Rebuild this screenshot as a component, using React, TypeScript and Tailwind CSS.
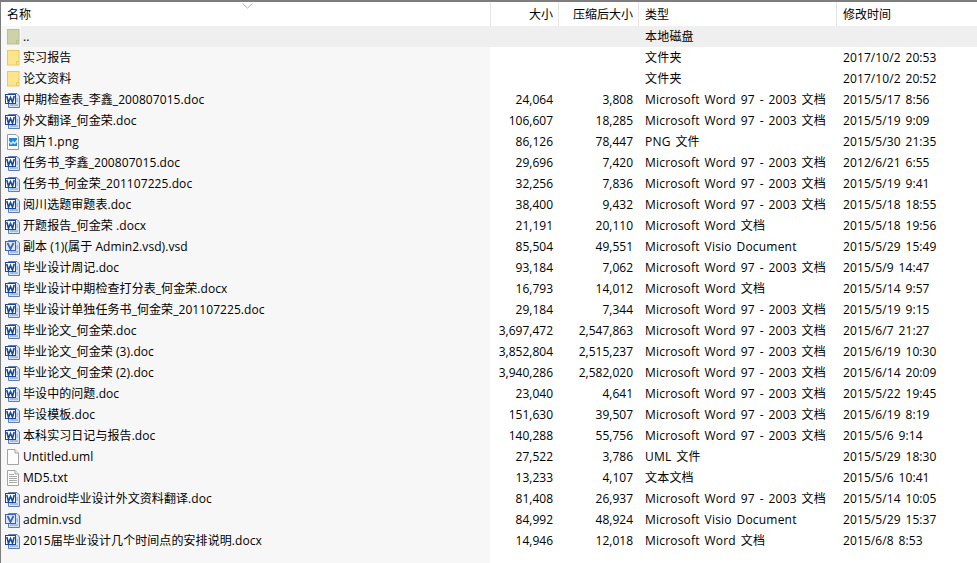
import React from "react";

type Kind = "up" | "folder" | "word" | "png" | "visio" | "blank" | "txt";
type Row = [Kind, string, string, string, string, string];

const WORD = "Microsoft Word 97 - 2003 文档";
const DOCX = "Microsoft Word 文档";
const VISIO = "Microsoft Visio Document";

const rows: Row[] = [
  ["up", "..", "", "", "本地磁盘", ""],
  ["folder", "实习报告", "", "", "文件夹", "2017/10/2 20:53"],
  ["folder", "论文资料", "", "", "文件夹", "2017/10/2 20:52"],
  ["word", "中期检查表_李鑫_200807015.doc", "24,064", "3,808", WORD, "2015/5/17 8:56"],
  ["word", "外文翻译_何金荣.doc", "106,607", "18,285", WORD, "2015/5/19 9:09"],
  ["png", "图片1.png", "86,126", "78,447", "PNG 文件", "2015/5/30 21:35"],
  ["word", "任务书_李鑫_200807015.doc", "29,696", "7,420", WORD, "2012/6/21 6:55"],
  ["word", "任务书_何金荣_201107225.doc", "32,256", "7,836", WORD, "2015/5/19 9:41"],
  ["word", "阅川选题审题表.doc", "38,400", "9,432", WORD, "2015/5/18 18:55"],
  ["word", "开题报告_何金荣 .docx", "21,191", "20,110", DOCX, "2015/5/18 19:56"],
  ["visio", "副本 (1)(属于 Admin2.vsd).vsd", "85,504", "49,551", VISIO, "2015/5/29 15:49"],
  ["word", "毕业设计周记.doc", "93,184", "7,062", WORD, "2015/5/9 14:47"],
  ["word", "毕业设计中期检查打分表_何金荣.docx", "16,793", "14,012", DOCX, "2015/5/14 9:57"],
  ["word", "毕业设计单独任务书_何金荣_201107225.doc", "29,184", "7,344", WORD, "2015/5/19 9:15"],
  ["word", "毕业论文_何金荣.doc", "3,697,472", "2,547,863", WORD, "2015/6/7 21:27"],
  ["word", "毕业论文_何金荣 (3).doc", "3,852,804", "2,515,237", WORD, "2015/6/19 10:30"],
  ["word", "毕业论文_何金荣 (2).doc", "3,940,286", "2,582,020", WORD, "2015/6/14 20:09"],
  ["word", "毕设中的问题.doc", "23,040", "4,641", WORD, "2015/5/22 19:45"],
  ["word", "毕设模板.doc", "151,630", "39,507", WORD, "2015/6/19 8:19"],
  ["word", "本科实习日记与报告.doc", "140,288", "55,756", WORD, "2015/5/6 9:14"],
  ["blank", "Untitled.uml", "27,522", "3,786", "UML 文件", "2015/5/29 18:30"],
  ["txt", "MD5.txt", "13,233", "4,107", "文本文档", "2015/5/6 10:41"],
  ["word", "android毕业设计外文资料翻译.doc", "81,408", "26,937", WORD, "2015/5/14 10:05"],
  ["visio", "admin.vsd", "84,992", "48,924", VISIO, "2015/5/29 15:37"],
  ["word", "2015届毕业设计几个时间点的安排说明.docx", "14,946", "12,018", DOCX, "2015/6/8 8:53"],
];

function Folder({ up }: { up?: boolean }) {
  const fill = up ? "#cdd3a6" : "#fde58e";
  const line = up ? "#b9c08f" : "#ecc95c";
  return (
    <svg width="16" height="16" viewBox="0 0 16 16" className="block">
      <rect x="2.5" y="0.5" width="11.5" height="14.5" fill={fill} stroke={line} />
      <path d="M11.5 15V11.5H14" fill="none" stroke={line} />
    </svg>
  );
}

function DocIcon({ letter }: { letter: "W" | "V" }) {
  const dark = letter === "W" ? "#17489a" : "#3b62b5";
  return (
    <svg width="16" height="16" viewBox="0 0 16 16" className="block">
      <path d="M3.5 1.5H12L14.5 4V15.5H3.5Z" fill="#d3e1f4" stroke="#5d7fb5" />
      <path d="M11.5 7H13M11.5 9H13M5 13H13" stroke="#7f9ccb" />
      <rect x="0.5" y="2.5" width="10" height="9" fill={letter === "W" ? "#fff" : "#dce8fa"} stroke={dark} />
      {letter === "W" ? (
        <path d="M1.8 4L3.5 10.2L5.5 5.5L7.5 10.2L9.2 4" fill="none" stroke={dark} strokeWidth="1.6" />
      ) : (
        <path d="M2.5 4L5.5 10L8.5 4" fill="none" stroke={dark} strokeWidth="1.7" />
      )}
    </svg>
  );
}

function PngIcon() {
  return (
    <svg width="16" height="16" viewBox="0 0 16 16" className="block">
      <path d="M2.5 0.5H11L13.5 3V15.5H2.5Z" fill="#fdfdfd" stroke="#9a9a9a" />
      <rect x="4" y="4" width="8" height="8" fill="#1b87dd" />
      <path d="M4 6.5L6 9L8 6.5L9.5 8.5L12 5.5V8L9.5 10.5L8 9L6 11L4 8.5Z" fill="#d6ecfb" />
    </svg>
  );
}

function BlankIcon({ lines }: { lines?: boolean }) {
  return (
    <svg width="16" height="16" viewBox="0 0 16 16" className="block">
      <path d="M2.5 0.5H10L13.5 4V15.5H2.5Z" fill="#fdfdfd" stroke="#a3a3a3" />
      <path d="M10 0.5V4H13.5" fill="#eeeeee" stroke="#a3a3a3" />
      {lines && <path d="M4 4.5H9M4 6.5H12M4 8.5H12M4 10.5H12M4 12.5H12" stroke="#a8a8a8" />}
    </svg>
  );
}

function Icon({ kind }: { kind: Kind }) {
  switch (kind) {
    case "up":
      return <Folder up />;
    case "folder":
      return <Folder />;
    case "word":
      return <DocIcon letter="W" />;
    case "visio":
      return <DocIcon letter="V" />;
    case "png":
      return <PngIcon />;
    case "blank":
      return <BlankIcon />;
    default:
      return <BlankIcon lines />;
  }
}

export default function App() {
  return (
    <div
      className="w-[977px] h-[563px] overflow-hidden bg-white flex flex-col text-[12px] leading-[21px] text-black border-t-2 border-l border-[#7d7d7d]"
      style={{ fontFamily: '"Open Sans","Noto Sans CJK SC",sans-serif' }}
    >
      <div className="flex h-[24px] shrink-0 items-center relative">
        <div className="w-[490px] h-full pl-[6px] flex items-center border-r border-[#e5e5e5]">名称</div>
        <svg width="11" height="6" viewBox="0 0 11 6" className="absolute left-[241px] top-[1px]">
          <path d="M0.5 0.5L5.5 5L10.5 0.5" fill="none" stroke="#b5b5b5" />
        </svg>
        <div className="w-[68px] h-full pr-[5px] flex items-center justify-end border-r border-[#e5e5e5]">大小</div>
        <div className="w-[80px] h-full pr-[5px] flex items-center justify-end border-r border-[#e5e5e5]">压缩后大小</div>
        <div className="w-[198px] h-full pl-[6px] flex items-center border-r border-[#e5e5e5]">类型</div>
        <div className="flex-1 h-full pl-[6px] flex items-center">修改时间</div>
      </div>
      <div className="flex flex-col flex-1">
        {rows.map((r, i) => (
          <div key={i} className="flex h-[21px] shrink-0 items-center">
            <div className="w-[489px] h-full flex items-center bg-[#f7f7f7]">
              <div className="w-[20px] shrink-0 pl-[4px]">
                <Icon kind={r[0]} />
              </div>
              <div className={"flex-1 h-full pl-[2px] whitespace-nowrap tracking-[0.07px] " + (i === 0 ? "bg-[#efefef]" : "")}>{r[1]}</div>
            </div>
            <div className={"flex flex-1 h-full " + (i === 0 ? "bg-[#efefef]" : "")}>
              <div className="w-[69px] pr-[6px] text-right">{r[2]}</div>
              <div className="w-[80px] pr-[6px] text-right">{r[3]}</div>
              <div className="w-[197px] pl-[6px] whitespace-nowrap tracking-[0.2px] [word-spacing:1.5px]">{r[4]}</div>
              <div className="flex-1 pl-[7px] whitespace-nowrap tracking-[0.1px] [word-spacing:1.5px]">{r[5]}</div>
            </div>
          </div>
        ))}
        <div className="flex-1 w-[489px] bg-[#f7f7f7]" />
      </div>
    </div>
  );
}
